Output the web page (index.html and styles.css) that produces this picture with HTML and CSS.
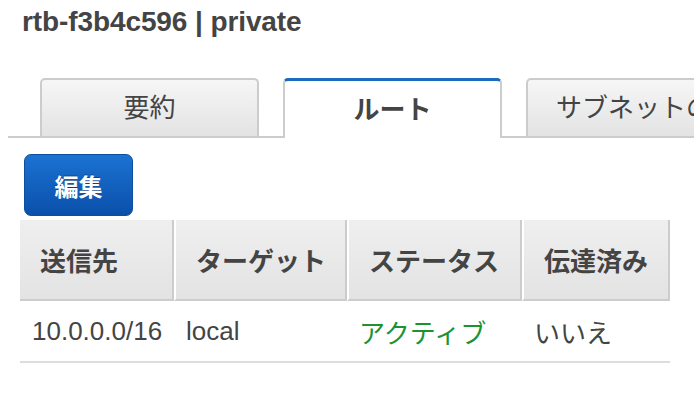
FILE: index.html
```html
<!DOCTYPE html>
<html lang="ja">
<head>
    <meta charset="UTF-8">
    <meta name="viewport" content="width=device-width, initial-scale=1.0">
    <title>rtb-f3b4c596 | private</title>
    <link rel="stylesheet" href="styles.css">
</head>
<body>
    <h1 class="title">rtb-f3b4c596 | private</h1>

    <nav class="tabs">
        <a class="tab" href="#summary">要約</a>
        <a class="tab active" href="#routes">ルート</a>
        <a class="tab wide" href="#subnets">サブネットの関連付け</a>
    </nav>

    <button class="btn-edit" type="button">編集</button>

    <table class="routes">
        <thead>
            <tr>
                <th class="col-dest">送信先</th>
                <th class="col-target">ターゲット</th>
                <th class="col-status">ステータス</th>
                <th class="col-prop">伝達済み</th>
            </tr>
        </thead>
        <tbody>
            <tr>
                <td>10.0.0.0/16</td>
                <td>local</td>
                <td class="ok">アクティブ</td>
                <td>いいえ</td>
            </tr>
        </tbody>
    </table>
</body>
</html>
```

FILE: styles.css
```css
body {
    margin: 0;
    overflow: hidden;
    background-color: #fff;
    color: #444;
    font-family: "Liberation Sans", "Noto Sans CJK JP", sans-serif;
}
.title {
    margin: 0;
    padding: 7px 0 0 22px;
    font-size: 28px;
    line-height: 30px;
    font-weight: bold;
    color: #444;
    letter-spacing: -0.1px;
}

/* tabs */
.tabs {
    display: flex;
    gap: 24px;
    height: 58px;
    margin: 41px 0 0 8px;
    padding-left: 32px;
    border-bottom: 2px solid #ccc;
}
.tab {
    flex: none;
    display: flex;
    align-items: center;
    justify-content: center;
    box-sizing: border-box;
    width: 219px;
    height: 58px;
    border: 2px solid #ccc;
    border-bottom: none;
    border-radius: 5px 5px 0 0;
    background: linear-gradient(#f6f6f6, #e3e3e3);
    color: #444;
    font-size: 26px;
    line-height: 30px;
    text-decoration: none;
    white-space: nowrap;
}
.tab.active {
    height: 60px;
    margin-bottom: -2px;
    border-top: 3px solid #1a69c2;
    background: #fff;
    font-weight: bold;
}
.tab.wide {
    width: auto;
    justify-content: flex-start;
    padding: 0 28px;
}

/* button */
.btn-edit {
    display: block;
    box-sizing: border-box;
    width: 109px;
    height: 62px;
    margin: 16px 0 0 24px;
    padding: 0;
    border: 1px solid #0b4f9e;
    border-radius: 7px;
    background: linear-gradient(#1b72d2, #0a50aa);
    color: #fff;
    font-family: inherit;
    font-size: 24px;
    font-weight: bold;
    text-shadow: 0 -1px 0 rgba(0,0,0,0.35);
}

/* table */
.routes {
    margin: 4px 0 0 20px;
    width: 650px;
    table-layout: fixed;
    border-collapse: separate;
    border-spacing: 0;
}
.routes th {
    box-sizing: border-box;
    height: 81px;
    padding: 0 0 0 20px;
    text-align: left;
    font-size: 26px;
    font-weight: bold;
    color: #444;
    background: linear-gradient(#efefef, #e3e3e3);
    border-left: 2px solid #fff;
    border-right: 2px solid #ccc;
    border-bottom: 2px solid #ccc;
}
.routes th:first-child {
    border-left: none;
}
.col-dest { width: 154px; }
.col-target { width: 173px; }
.col-status { width: 175px; }
.col-prop { width: 148px; }
.routes td {
    height: 60px;
    padding: 0 0 0 12px;
    font-size: 26px;
    color: #444;
    border-bottom: 2px solid #ddd;
}
.routes td.ok {
    color: #1b9330;
}
```
